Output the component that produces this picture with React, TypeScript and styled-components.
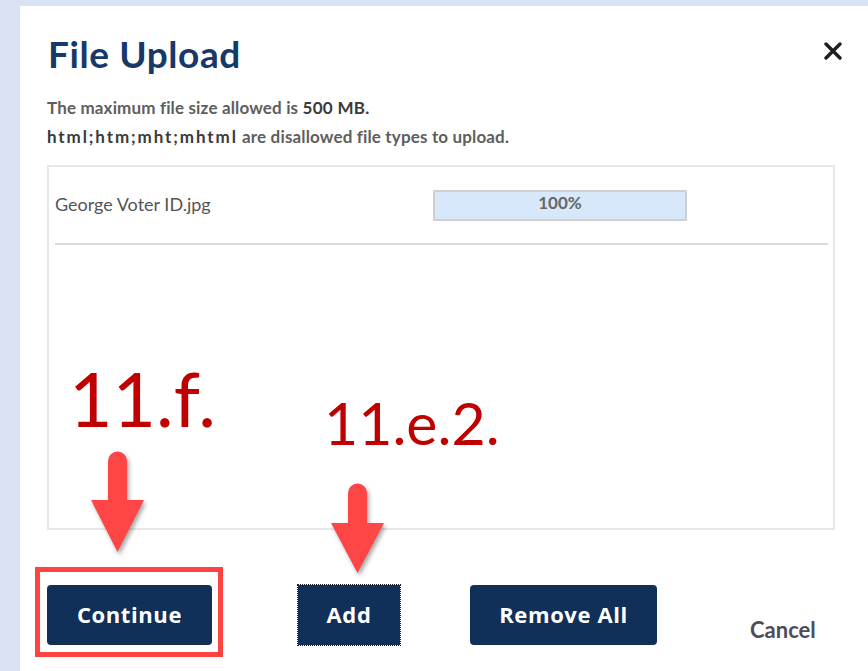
import React from "react";
import styled, { createGlobalStyle } from "styled-components";

const Global = createGlobalStyle`
  html, body {
    margin: 0;
    padding: 0;
    background: #dae3f3;
  }
  body {
    width: 868px;
    height: 671px;
    overflow: hidden;
    font-family: Lato, "Open Sans", "Liberation Sans", sans-serif;
  }
  * { box-sizing: border-box; }
`;

const Panel = styled.div`
  position: relative;
  margin: 6px 0 0 20px;
  height: 665px;
  background: #ffffff;
  padding: 28px 25px 0 27px;
`;

const Header = styled.div`
  display: flex;
  align-items: flex-start;
  justify-content: space-between;
`;

const Title = styled.h1`
  margin: 0 0 0 1px;
  font-size: 37px;
  line-height: 40px;
  font-weight: 700;
  letter-spacing: 0.6px;
  color: #16396a;
`;

const CloseButton = styled.button`
  display: flex;
  margin: 8px 0 0;
  padding: 0;
  border: 0;
  background: none;
  cursor: pointer;
`;

const Info = styled.div`
  margin-top: 19px;
  font-size: 17px;
  line-height: 29px;
  font-weight: 700;
  color: #5e5e5e;
  letter-spacing: 0.15px;
`;

const Strong = styled.strong<{ $wide?: boolean }>`
  color: #3a3a3a;
  font-weight: 700;
  letter-spacing: ${(p) => (p.$wide ? "1.9px" : "0.3px")};
`;

const DropBox = styled.div`
  margin-top: 14px;
  width: 788px;
  height: 365px;
  border: 2px solid #e8e8e8;
`;

const FileRow = styled.div`
  display: grid;
  grid-template-columns: 378px 254px;
  align-items: center;
  height: 76px;
  padding-left: 6px;
`;

const FileName = styled.span`
  font-size: 18px;
  color: #555;
  padding-bottom: 2px;
`;

const Progress = styled.div`
  height: 31px;
  border: 2px solid #d0d0d0;
  background: #d6e8f9;
  display: flex;
  align-items: center;
  justify-content: center;
  font-size: 17px;
  font-weight: 700;
  color: #666;
  padding-bottom: 5px;
`;

const Rule = styled.hr`
  margin: 0 5px 0 6px;
  border: 0;
  border-top: 2px solid #d9d9d9;
`;

const Actions = styled.div`
  display: flex;
  align-items: flex-start;
  margin-top: 55px;
`;

const Button = styled.button<{ $w: number; $gap: number; $focused?: boolean }>`
  width: ${(p) => p.$w}px;
  height: 60px;
  margin-left: ${(p) => p.$gap}px;
  padding: 0 0 3px;
  border: 0;
  border-radius: ${(p) => (p.$focused ? 0 : 4)}px;
  background: #10305a;
  color: #ffffff;
  font-family: "Open Sans", Lato, sans-serif;
  font-size: 22px;
  font-weight: 700;
  letter-spacing: 0.6px;
  outline: ${(p) => (p.$focused ? "1px dotted #1b1b1b" : "none")};
  outline-offset: 0;
  cursor: pointer;
`;

const TextButton = styled.button`
  margin: 32px 0 0 93px;
  padding: 0;
  border: 0;
  background: none;
  font-family: Lato, sans-serif;
  font-size: 22px;
  line-height: 26px;
  font-weight: 700;
  color: #4d4d59;
  cursor: pointer;
`;

/* callout layer drawn over the dialog */
const Callout = styled.span<{ $x: number; $y: number; $size: number }>`
  position: absolute;
  left: ${(p) => p.$x}px;
  top: ${(p) => p.$y}px;
  font-family: Lato, "Open Sans", sans-serif;
  font-size: ${(p) => p.$size}px;
  line-height: 1;
  color: #c00000;
  white-space: nowrap;
`;

const ArrowSvg = styled.svg<{ $x: number; $y: number }>`
  position: absolute;
  left: ${(p) => p.$x}px;
  top: ${(p) => p.$y}px;
  overflow: visible;
  filter: drop-shadow(2px 3px 2px rgba(0, 0, 0, 0.35));
`;

const Highlight = styled.div`
  position: absolute;
  left: 15px;
  top: 561px;
  width: 188px;
  height: 90px;
  border: 5px solid #ff4343;
  pointer-events: none;
`;

function DownArrow({ x, y, head, tip }: { x: number; y: number; head: number; tip: number }) {
  return (
    <ArrowSvg $x={x} $y={y} width={57} height={tip + 2} viewBox={`0 0 57 ${tip + 2}`}>
      <path
        d={`M18,11 a9.5,9.5 0 0 1 19,0 V${head} H54 L27.5,${tip} L1,${head} H18 Z`}
        fill="#ff4646"
      />
    </ArrowSvg>
  );
}

export default function App() {
  return (
    <>
      <Global />
      <Panel>
        <Header>
          <Title>File Upload</Title>
          <CloseButton aria-label="Close">
            <svg width="20" height="18" viewBox="0 0 20 18">
              <path d="M3 2 L17 16 M17 2 L3 16" stroke="#1e1e1e" strokeWidth="3.4" strokeLinecap="round" />
            </svg>
          </CloseButton>
        </Header>
        <Info>
          <div>
            The maximum file size allowed is <Strong>500 MB.</Strong>
          </div>
          <div>
            <Strong $wide>html;htm;mht;mhtml</Strong> are disallowed file types to upload.
          </div>
        </Info>
        <DropBox>
          <FileRow>
            <FileName>George Voter ID.jpg</FileName>
            <Progress>100%</Progress>
          </FileRow>
          <Rule />
        </DropBox>
        <Actions>
          <Button $w={165} $gap={0}>Continue</Button>
          <Button $w={102} $gap={86} $focused>Add</Button>
          <Button $w={187} $gap={70}>Remove All</Button>
          <TextButton>Cancel</TextButton>
        </Actions>

        <Callout $x={49} $y={355} $size={75}>11.f.</Callout>
        <Callout $x={304} $y={387} $size={59}>11.e.2.</Callout>
        <DownArrow x={70} y={444} head={50} tip={102} />
        <DownArrow x={310} y={476} head={41} tip={91} />
        <Highlight />
      </Panel>
    </>
  );
}
